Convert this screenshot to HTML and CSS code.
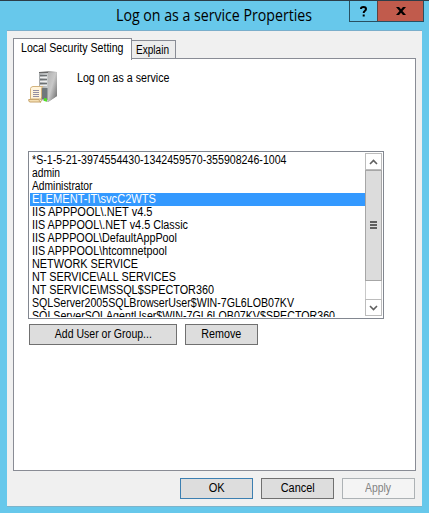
FILE: index.html
```html
<!DOCTYPE html>
<html lang="en">
<head>
<meta charset="utf-8">
<title>Log on as a service Properties</title>
<link rel="stylesheet" href="styles.css">
</head>
<body>
<div class="window">
  <header class="titlebar">
    <h1 class="title"><span class="fit" data-w="196">Log on as a service Properties</span></h1>
    <div class="controls">
      <button class="help" aria-label="Help"><svg width="8" height="11" viewBox="0 0 8 11"><path d="M1 3V2.5Q1 1 3.5 1T6 3Q6 4.2 4.8 5T3.7 7" fill="none" stroke="#000" stroke-width="2"/><path d="M2.7 8.5h2v2h-2z"/></svg></button>
      <button class="close" aria-label="Close"><svg width="10" height="8" viewBox="0 0 10 8"><path d="M0 0h3l2 2.3L7 0h3L6.5 4 10 8H7L5 5.7 3 8H0l3.5-4z"/></svg></button>
    </div>
  </header>
  <main class="content">
    <nav class="tabs">
      <div class="tab active"><span class="fit" data-w="102.5">Local Security Setting</span></div>
      <div class="tab"><span class="fit" data-w="33">Explain</span></div>
    </nav>
    <section class="panel">
      <div class="intro">
        <svg class="server" width="30" height="32" viewBox="0 0 30 32">
          <defs>
            <linearGradient id="side" x1="0" y1="0" x2="1" y2="1"><stop offset="0" stop-color="#b4b4b4"/><stop offset=".45" stop-color="#c9c9c9"/><stop offset="1" stop-color="#666"/></linearGradient>
            <linearGradient id="front" x1="0" y1="0" x2="1" y2="0"><stop offset="0" stop-color="#a5a8aa"/><stop offset="1" stop-color="#c8cbcc"/></linearGradient>
          </defs>
          <path d="M11 1L20 0 29 1V25L20 31 11 28z" fill="#999"/>
          <path d="M11 1L20 1.500V31L11 28z" fill="url(#front)"/>
          <path d="M20 1.500L29 1V25L20 31z" fill="url(#side)"/>
          <path d="M11 1.500h9" stroke="#666"/>
          <path d="M12 4.500h7M12 8.500h7M12 12.500h7" stroke="#6d7173"/>
          <path d="M12 6.500h7M12 10.500h7M12 14.500h7" stroke="#eee"/>
          <path d="M14 17h5.500v12L14 28z" fill="#70777b"/>
          <path d="M16 27l3 .5v3l-3-.5z" fill="#4ee320"/>
          <path d="M2.500 17.500Q3 15.500 5 15.500H15Q13.500 16 13.500 18V28H2.500z" fill="#fff4dc" stroke="#d3b37d"/>
          <path d="M.7 28.500H11Q11 31 13 31H2Q.5 31 .7 28.500z" fill="#f5dfb4" stroke="#c7a46c"/>
          <path d="M13.500 26v2.500Q13.500 31 12 31" fill="none" stroke="#c7a46c"/>
          <path d="M5 19.500h6M5 21.500h6M5 23.500h6M5 25.500h6" stroke="#948fa4"/>
        </svg>
        <p class="policy"><span class="fit" data-w="92.500">Log on as a service</span></p>
      </div>
      <div class="listbox">
        <ul class="accounts">
          <li><span class="fit" data-w="254.500">*S-1-5-21-3974554430-1342459570-355908246-1004</span></li>
          <li><span class="fit" data-w="28">admin</span></li>
          <li><span class="fit" data-w="60.500">Administrator</span></li>
          <li class="selected"><span class="fit" data-w="124">ELEMENT-IT\svcC2WTS</span></li>
          <li><span class="fit" data-w="120.500">IIS APPPOOL\.NET v4.5</span></li>
          <li><span class="fit" data-w="156">IIS APPPOOL\.NET v4.5 Classic</span></li>
          <li><span class="fit" data-w="145">IIS APPPOOL\DefaultAppPool</span></li>
          <li><span class="fit" data-w="135">IIS APPPOOL\htcomnetpool</span></li>
          <li><span class="fit" data-w="106">NETWORK SERVICE</span></li>
          <li><span class="fit" data-w="144">NT SERVICE\ALL SERVICES</span></li>
          <li><span class="fit" data-w="182">NT SERVICE\MSSQL$SPECTOR360</span></li>
          <li><span class="fit" data-w="262">SQLServer2005SQLBrowserUser$WIN-7GL6LOB07KV</span></li>
          <li><span class="fit" data-w="303">SQLServerSQLAgentUser$WIN-7GL6LOB07KV$SPECTOR360</span></li>
        </ul>
        <div class="scrollbar">
          <div class="arrow"><svg width="9" height="6" viewBox="0 0 9 6"><path d="M1 5L4.500 1.500 8 5" fill="none" stroke="#606060" stroke-width="1.600"/></svg></div>
          <div class="thumb"><i></i><i></i><i></i></div>
          <div class="track"></div>
          <div class="arrow down"><svg width="9" height="6" viewBox="0 0 9 6"><path d="M1 1L4.500 4.500 8 1" fill="none" stroke="#606060" stroke-width="1.600"/></svg></div>
        </div>
      </div>
      <div class="actions">
        <button class="btn add"><span class="fit" data-w="97">Add User or Group...</span></button>
        <button class="btn"><span class="fit" data-w="40">Remove</span></button>
      </div>
    </section>
    <footer class="footer">
      <button class="btn default"><span class="fit" data-w="16">OK</span></button>
      <button class="btn"><span class="fit" data-w="34">Cancel</span></button>
      <button class="btn disabled" disabled><span class="fit" data-w="26">Apply</span></button>
    </footer>
  </main>
</div>
<script src="fit.js"></script>
</body>
</html>
```
FILE: styles.css
```css
* { box-sizing: border-box; }
body {
  margin: 0;
  width: 429px;
  height: 513px;
  overflow: hidden;
  font: 12px/13px "Liberation Sans", Arial, sans-serif;
  color: #000;
}
.window {
  display: flex;
  flex-direction: column;
  width: 429px;
  height: 513px;
  padding: 0 5px 6px 7px;
  background: #67c8eb;
  border-top: 1px solid #2c3d48;
}
.titlebar {
  display: flex;
  justify-content: flex-end;
  height: 29px;
  flex: none;
}
.title {
  flex: 1;
  margin: 0;
  padding-left: 109px;
  font: 400 16px/29px "Open Sans", "Noto Sans", sans-serif;
  white-space: nowrap;
}
.controls {
  display: flex;
  width: 75px;
  height: 21px;
  flex: none;
  border: 1px solid #285061;
  border-top: 0;
}
.controls button {
  display: flex;
  align-items: center;
  justify-content: center;
  padding: 0;
  border: 0;
  background: transparent;
}
.controls .help { width: 27px; }
.controls .close {
  flex: 1;
  background: #c15b4c;
  border-left: 1px solid #5f423f;
}
.content {
  flex: 1;
  display: flex;
  flex-direction: column;
  padding: 7px 6px 0;
  width: 415px;
  background: #f0f0f0;
  border-top: 1px solid #7aaecb;
  border-bottom: 1px solid #7cb4cb;
}
.tabs {
  display: flex;
  flex: none;
  align-items: flex-end;
  height: 21px;
  z-index: 1;
}
.tab {
  height: 19px;
  width: 44px;
  padding: 3px 0 0 4px;
  border: 1px solid #898c95;
  border-left: 0;
  background: #ececec;
  white-space: nowrap;
}
.tab.active {
  position: relative;
  width: 119px;
  height: 22px;
  margin-bottom: -1px;
  padding: 3px 0 0 7px;
  border-left: 1px solid #898c95;
  border-bottom: 0;
  background: #fff;
}
.panel {
  height: 413px;
  width: 403px;
  margin-top: -1px;
  padding: 12px 0 0 14px;
  border: 1px solid #898c95;
  background: #fff;
}
.intro {
  display: flex;
  height: 80px;
}
.policy {
  margin: 1px 0 0 19px;
  white-space: nowrap;
}
.listbox {
  display: flex;
  width: 356px;
  height: 168px;
  padding: 1px;
  border: 1px solid #828790;
}
.accounts {
  flex: 1;
  height: 163px;
  margin: 1px 0 0;
  padding: 0;
  overflow: hidden;
  list-style: none;
  white-space: nowrap;
}
.accounts li {
  height: 13px;
  padding-left: 2px;
}
.accounts .selected {
  background: #3399ff;
  color: #fff;
}
.scrollbar {
  display: flex;
  flex-direction: column;
  width: 17px;
  height: 163px;
}
.arrow {
  display: flex;
  align-items: center;
  justify-content: center;
  height: 17px;
  border: 1px solid #bcbcbc;
  background: #fff;
}
.thumb {
  display: flex;
  flex-direction: column;
  align-items: center;
  justify-content: center;
  gap: 1px;
  height: 111px;
  padding-bottom: 1px;
  border: 1px solid #a6a6a6;
  background: #dcdcdc;
}
.thumb i {
  width: 7px;
  height: 2px;
  background: #606060;
}
.track {
  flex: 1;
  border: solid #c8c8c8;
  border-width: 0 1px;
}
.actions {
  display: flex;
  gap: 8px;
  padding: 5px 0 0 1px;
}
.btn {
  width: 73px;
  height: 21px;
  padding: 0;
  border: 1px solid #707070;
  background: #ddd;
  color: #000;
  font: inherit;
  white-space: nowrap;
}
.btn.add { width: 148px; }
.footer {
  display: flex;
  justify-content: flex-end;
  gap: 8px;
  padding: 7px 1px 0 0;
}
.btn.default { border-color: #3c7fb1; }
.btn.disabled {
  border-color: #adb2b5;
  background: #f4f4f4;
  color: #838383;
}
.fit {
  display: inline-block;
  transform-origin: left center;
}
.btn .fit { transform-origin: center; }
```
FILE: fit.js
```js
// Condense each label to its dialog text width.
document.querySelectorAll('.fit').forEach(function (label) {
  var natural = label.getBoundingClientRect().width;
  label.style.transform = 'scaleX(' + Number(label.dataset.w) / natural + ')';
});
```
